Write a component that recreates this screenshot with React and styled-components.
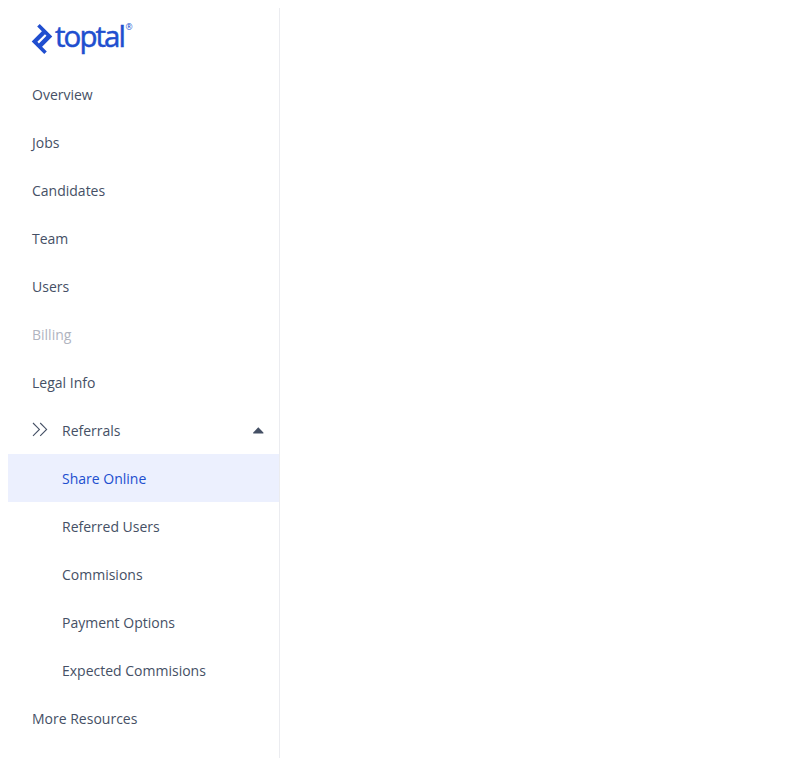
import React from 'react';
import styled, { createGlobalStyle } from 'styled-components';
import { SiToptal } from 'react-icons/si';

const GlobalStyle = createGlobalStyle`
  body {
    margin: 8px;
    background: #fff;
    font-family: 'Open Sans', sans-serif;
  }
`;

const Sidebar = styled.aside`
  box-sizing: border-box;
  width: 272px;
  height: 750px;
  padding-top: 16px;
  border-right: 1px solid #ebecf0;
`;

const LogoLink = styled.div`
  display: flex;
  height: 30px;
  margin: 0 0 16px 24px;
  color: #204ecf;
`;

const LogoMark = styled(SiToptal)`
  flex: none;
  width: 30px;
  height: 30px;
  margin: 0 -5px;
`;

const LogoSvg = styled.svg`
  display: block;
  overflow: visible;
  fill: currentColor;
`;

const Wordmark = styled.text`
  font-family: 'Open Sans', sans-serif;
  font-size: 29.5px;
  stroke: currentColor;
  stroke-width: 0.5px;
`;

const Registered = styled.text`
  font-family: 'Open Sans', sans-serif;
  font-size: 8.5px;
`;

const Menu = styled.ul`
  margin: 0;
  padding: 0;
  list-style: none;
`;

const textColor = ({ $selected, $disabled }) =>
  $selected ? '#204ecf' : $disabled ? '#b0b4bf' : '#455065';

const MenuItem = styled.li`
  box-sizing: border-box;
  display: flex;
  align-items: center;
  height: 48px;
  padding: 0 15px 0 ${({ $nested }) => ($nested ? '54px' : '24px')};
  color: ${textColor};
  background: ${({ $selected }) => ($selected ? '#ecf0fe' : 'transparent')};
  font-size: 14px;
  line-height: 20px;
`;

const Label = styled.span`
  flex: 1;
  padding-top: 1px;
`;

const ItemIcon = styled.svg`
  width: 16px;
  height: 16px;
  margin-right: 14px;
  fill: none;
  stroke: #455065;
  stroke-width: 1.1px;
`;

const ArrowIcon = styled.svg`
  width: 11px;
  height: 7px;
  fill: #455065;
`;

const Logo = () => (
  <LogoLink>
    <LogoMark />
    <LogoSvg width="81" height="30" viewBox="0 0 81 30">
      <Wordmark x="3" y="23" textLength="71" lengthAdjust="spacing">toptal</Wordmark>
      <Registered x="73.6" y="6.3">®</Registered>
    </LogoSvg>
  </LogoLink>
);

const primary = ['Overview', 'Jobs', 'Candidates', 'Team', 'Users', 'Billing', 'Legal Info'];
const referrals = ['Share Online', 'Referred Users', 'Commisions', 'Payment Options', 'Expected Commisions'];

export default function App() {
  return (
    <>
      <GlobalStyle />
      <Sidebar>
        <Logo />
        <Menu>
          {primary.map((name) => (
            <MenuItem key={name} $disabled={name === 'Billing'}>
              <Label>{name}</Label>
            </MenuItem>
          ))}
          <MenuItem>
            <ItemIcon viewBox="0 0 16 16">
              <path d="m1 1 6.4 6.4L1 13.9M8.2 1l6.4 6.4-6.4 6.5" />
            </ItemIcon>
            <Label>Referrals</Label>
            <ArrowIcon viewBox="0 0 11 7">
              <path d="M5.3 .2 10.4 5.6V6.5H.2V5.6Z" />
            </ArrowIcon>
          </MenuItem>
          {referrals.map((name) => (
            <MenuItem key={name} $nested $selected={name === 'Share Online'}>
              <Label>{name}</Label>
            </MenuItem>
          ))}
          <MenuItem>
            <Label>More Resources</Label>
          </MenuItem>
        </Menu>
      </Sidebar>
    </>
  );
}
